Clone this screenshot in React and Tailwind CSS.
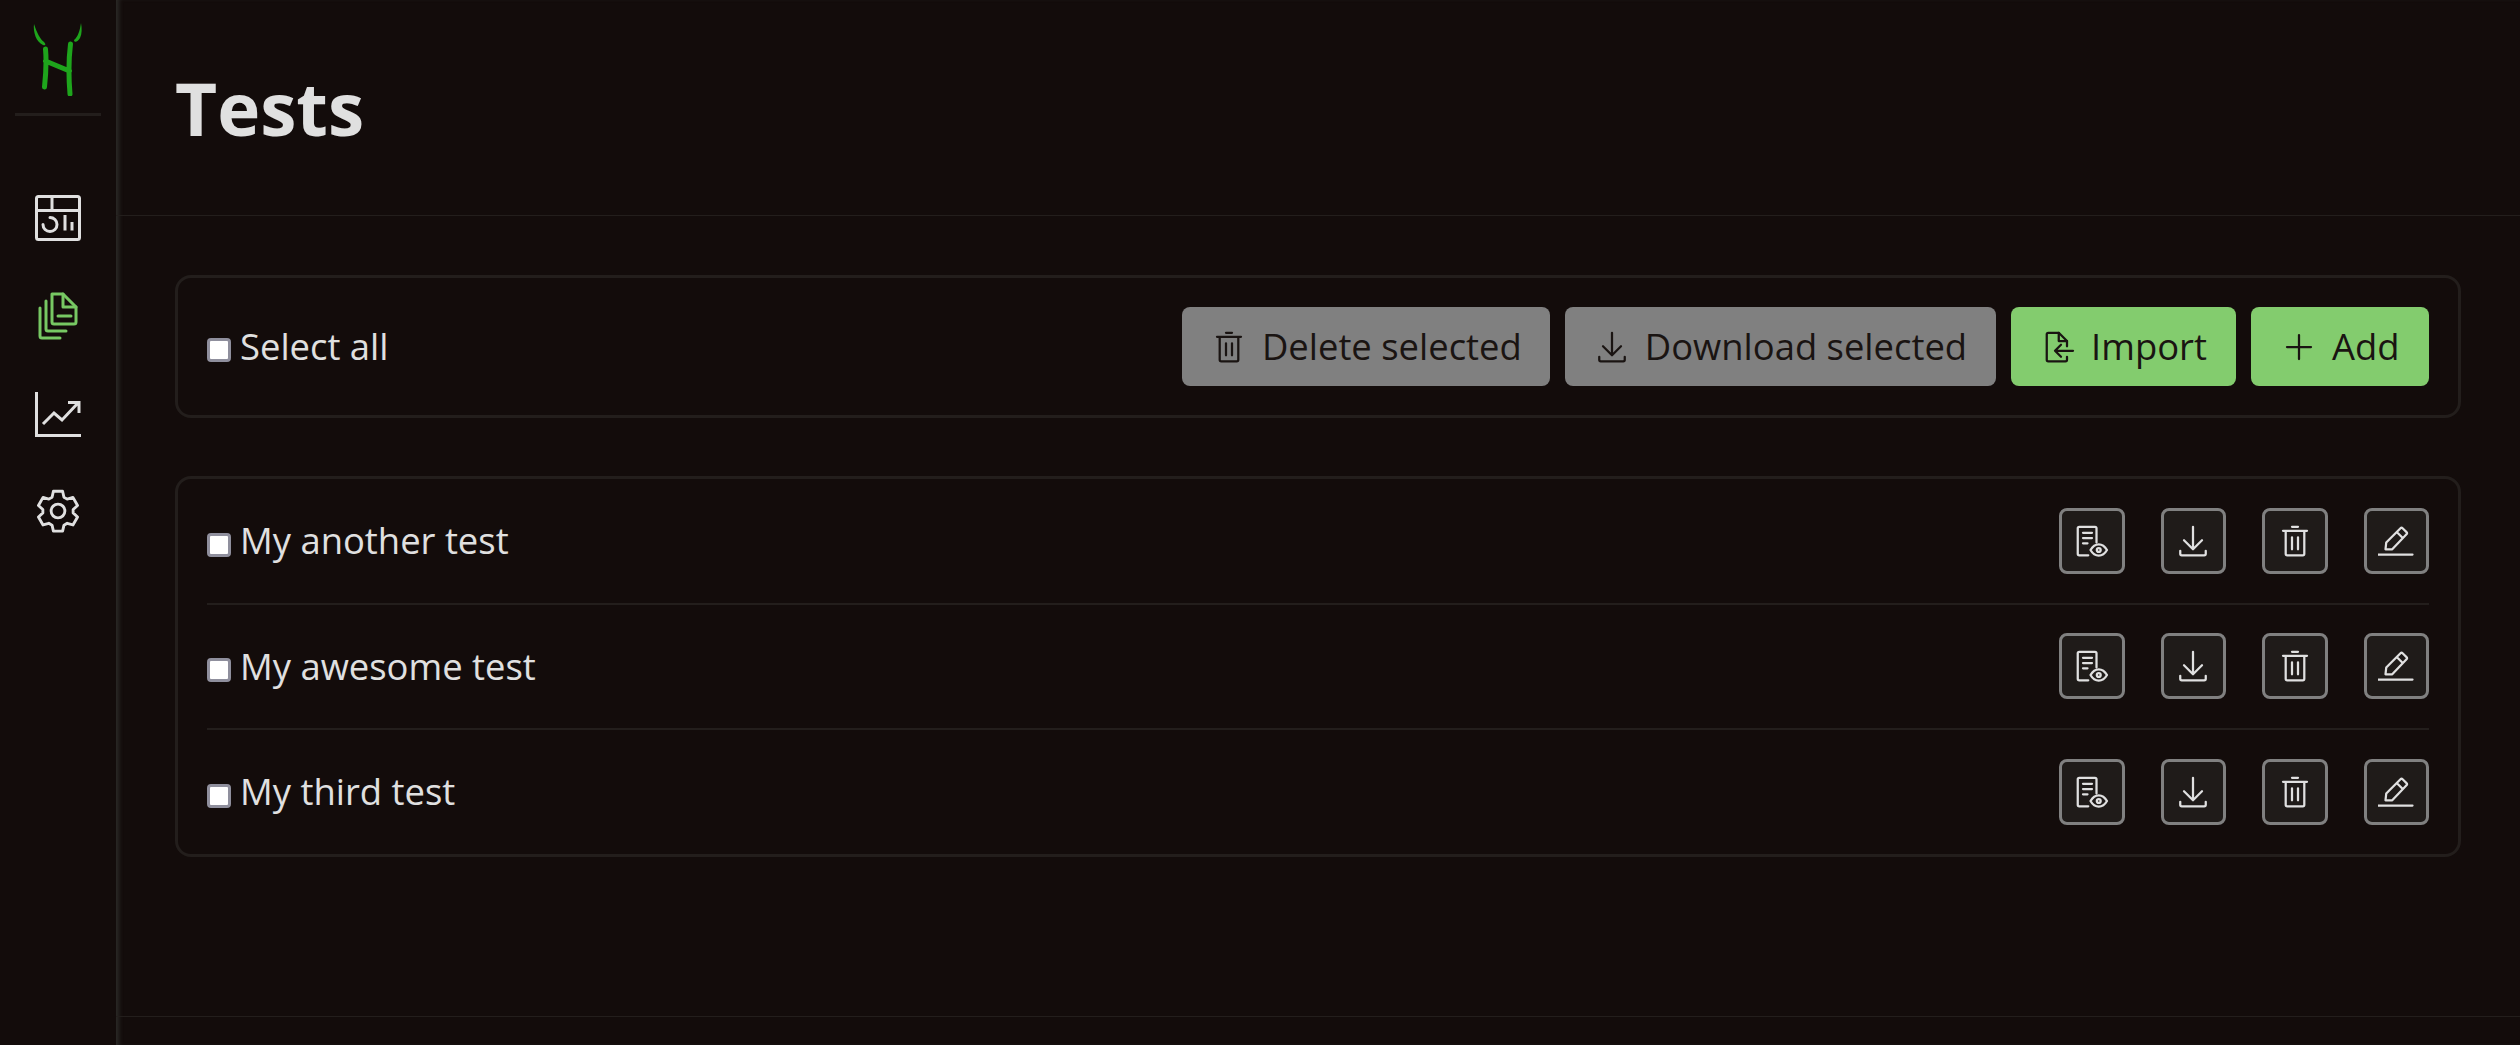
import React from "react";

const Ico = ({ className, children, size = 36, sw = 1.5 }) => (
  <svg
    width={size}
    height={size}
    viewBox="0 0 24 24"
    fill="none"
    stroke="currentColor"
    strokeWidth={sw}
    strokeLinecap="round"
    strokeLinejoin="round"
    className={className}
  >
    {children}
  </svg>
);

const TrashIcon = (p) => (
  <Ico {...p}>
    <path d="M10 2.5h4M4 5.2h16M5.8 5.2v15.3a1 1 0 0 0 1 1h10.4a1 1 0 0 0 1-1V5.2M10 9.5v8M14 9.5v8" />
  </Ico>
);

const DownloadIcon = (p) => (
  <Ico {...p}>
    <path d="M12 2.5v15M6 11.5l6 6 6-6M3.5 18.5v2a1 1 0 0 0 1 1h15a1 1 0 0 0 1-1v-2" />
  </Ico>
);

const ImportIcon = (p) => (
  <Ico {...p}>
    <path d="M18 11.5V8l-5.5-5.5H5.5a1 1 0 0 0-1 1v17a1 1 0 0 0 1 1h11.500a1 1 0 0 0 1-1v-2" />
    <path d="M12.500 2.500V8H18M22 14.500H10M14 10.500l-4 4 4 4" />
  </Ico>
);

const PlusIcon = (p) => (
  <Ico {...p}>
    <path d="M12 4v16M4 12h16" />
  </Ico>
);

const ReportViewIcon = (p) => (
  <Ico {...p}>
    <path d="M15 13V3.500a1 1 0 0 0-1-1H3.500a1 1 0 0 0-1 1v17a1 1 0 0 0 1 1h6" />
    <path d="M6 6.500h6M6 10h6M6 13.500h3" />
    <path d="M11 18c1.500-2.600 3.500-3.800 5.500-3.800s4 1.200 5.500 3.800c-1.500 2.600-3.500 3.800-5.500 3.800s-4-1.200-5.500-3.800z" />
    <circle cx="16.500" cy="18" r="1.300" />
  </Ico>
);

const EditIcon = (p) => (
  <Ico {...p}>
    <path d="M5 17.500l0.500-4.500L15 3.500a1 1 0 0 1 1.400 0l2.600 2.600a1 1 0 0 1 0 1.400L9.500 17.500zM12.500 6l4 4M0 21h23" />
  </Ico>
);

const DashboardIcon = () => (
  <svg width="46" height="46" viewBox="0 0 46 46" fill="none" stroke="currentColor" strokeWidth="3">
    <rect x="1.500" y="1.500" width="43" height="43" rx="2" />
    <path d="M1.500 15.500h43M17 1.500v14" />
    <path d="M15 22.500a7 7 0 1 1-7 7" strokeLinecap="round" />
    <path d="M30 20v15.500M37 27v8.500" />
  </svg>
);

const DocsIcon = () => (
  <svg width="40" height="48" viewBox="0 0 40 48" fill="none" stroke="currentColor" strokeWidth="3" strokeLinejoin="round" strokeLinecap="round">
    <path d="M14 2h11l13 13v15a2 2 0 0 1-2 2H16a2 2 0 0 1-2-2V2z" />
    <path d="M25 2v13h13M20 24h13" />
    <path d="M8 9v28a2 2 0 0 0 2 2h18" />
    <path d="M2 16v28a2 2 0 0 0 2 2h18" />
  </svg>
);

const ChartIcon = () => (
  <svg width="46" height="46" viewBox="0 0 46 46" fill="none" stroke="currentColor" strokeWidth="3">
    <path d="M1.500 1v43.500H46" />
    <path d="M8 33l11-11 8 7 16-17M33 11.500h11V22" />
  </svg>
);

const GearIcon = () => (
  <svg width="46" height="46" viewBox="0 0 24 24" fill="none" stroke="currentColor" strokeWidth="1.500" strokeLinejoin="round">
    <path d="M9.600 1.700h4.800l.7 3.100 1.700 1 3-.9 2.400 4.200-2.300 2.100v1.800l2.300 2.100-2.400 4.200-3-.9-1.700 1-.7 3.100H9.600l-.7-3.100-1.700-1-3 .9-2.400-4.200 2.300-2.100v-1.800L1.800 9.100l2.400-4.200 3 .9 1.700-1z" />
    <circle cx="12" cy="12" r="3.600" />
  </svg>
);

const Logo = () => (
  <svg width="60" height="76" viewBox="0 0 60 76" fill="#1ea51c">
    <path d="M6 4C5 12 8 22 15 25c3 1 3-1 1-3C12 19 9 13 6 4z" />
    <path d="M53 3c-1 7-3 14-7 17 0 3 4 2 6-2 2-4 2-10 1-15z" />
    <path
      d="M17.500 29c1 11 .5 24-1 38M17.500 41l24 10M42.500 24c-2 16-2 32-.5 50"
      fill="none"
      stroke="#1ea51c"
      strokeWidth="5"
      strokeLinecap="round"
    />
  </svg>
);

const Checkbox = () => (
  <input
    type="checkbox"
    className="appearance-none w-6 h-6 mt-[8px] shrink-0 bg-white border-[3px] border-[#8f8f9d] rounded-[4px]"
  />
);

const ActionButton = ({ icon: Icon, label, gray }) => (
  <button
    className={
      "h-[79px] flex items-center gap-[15px] rounded-lg text-[36.4px] text-[#1a1412] " +
      (gray ? "px-[28.5px] bg-[#808080]" : "px-[29.5px] bg-[#83cc6e]")
    }
  >
    <Icon />
    <span>{label}</span>
  </button>
);

const IconButton = ({ icon: Icon }) => (
  <button className="w-[65.5px] h-[66px] flex items-center justify-center rounded-lg bg-[#1f1b19] border-[3px] border-[#808080] text-[#e0e0e0]">
    <Icon />
  </button>
);

const tests = ["My another test", "My awesome test", "My third test"];

export default function App() {
  return (
    <div className="flex h-screen bg-[#130c0b] text-[#e0e0e0] font-['Open_Sans',sans-serif] overflow-hidden">
      <aside className="w-[116px] shrink-0 flex flex-col items-center">
        <div className="w-[86px] h-[116px] flex justify-center items-start pt-5 border-b-[3px] border-[#231e1c]">
          <Logo />
        </div>
        <nav className="flex flex-col items-center mt-[79px]">
          <div className="h-[46px] flex items-center justify-center">
            <DashboardIcon />
          </div>
          <div className="h-[48px] mt-[51px] flex items-center justify-center text-[#77c863]">
            <DocsIcon />
          </div>
          <div className="h-[46px] mt-[51px] flex items-center justify-center">
            <ChartIcon />
          </div>
          <div className="h-[46px] mt-[51px] flex items-center justify-center">
            <GearIcon />
          </div>
        </nav>
      </aside>

      <main className="flex-1 flex flex-col shadow-[inset_5px_0_4px_-2px_#2b2a27]">
        <header className="h-[216px] shrink-0 flex items-center pl-[59px] pt-[2px] border-b border-[#231e1c]">
          <h1 className="text-[72.8px] font-bold leading-none text-[#e0e0e0]">Tests</h1>
        </header>

        <div className="flex-1 flex flex-col gap-[58px] pl-[59px] pr-[59px] pt-[59px]">
          <section className="flex items-center justify-between px-[29px] py-[29px] border-[3px] border-[#231e1c] rounded-2xl">
            <label className="flex items-center gap-[9px] text-[36.4px]">
              <Checkbox />
              Select all
            </label>
            <div className="flex gap-[15px]">
              <ActionButton icon={TrashIcon} label="Delete selected" gray />
              <ActionButton icon={DownloadIcon} label="Download selected" gray />
              <ActionButton icon={ImportIcon} label="Import" />
              <ActionButton icon={PlusIcon} label="Add" />
            </div>
          </section>

          <section className="flex flex-col px-[29px] border-[3px] border-[#231e1c] rounded-2xl">
            {tests.map((name) => (
              <div
                key={name}
                className="flex items-center justify-between py-[28.75px] border-b-2 border-[#231e1c] last:border-b-0"
              >
                <label className="flex items-center gap-[9px] text-[36.4px]">
                  <Checkbox />
                  {name}
                </label>
                <div className="flex gap-[36px]">
                  <IconButton icon={ReportViewIcon} />
                  <IconButton icon={DownloadIcon} />
                  <IconButton icon={TrashIcon} />
                  <IconButton icon={EditIcon} />
                </div>
              </div>
            ))}
          </section>
        </div>

        <footer className="h-[29px] shrink-0 border-t border-[#231e1c]" />
      </main>
    </div>
  );
}
